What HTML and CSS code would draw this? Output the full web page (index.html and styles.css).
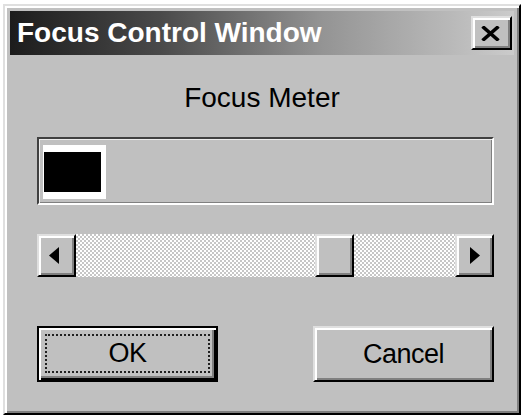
FILE: index.html
```html
<!DOCTYPE html>
<html>
<head>
<meta charset="utf-8">
<title>Focus Control Window</title>
<link rel="stylesheet" href="styles.css">
</head>
<body>
<div class="window">
  <div class="titlebar">
    <span class="title">Focus Control Window</span>
    <button class="close" aria-label="Close">
      <svg width="19" height="15" viewBox="0 0 19 15"><path d="M1.5 0.5 L17.5 14.5 M17.5 0.5 L1.5 14.5" stroke="#000" stroke-width="3.6" fill="none"/></svg>
    </button>
  </div>
  <div class="content">
    <div class="label">Focus Meter</div>
    <div class="meter">
      <div class="chunk"><div class="chunk-fill"></div></div>
    </div>
    <div class="scrollbar">
      <div class="sb-btn sb-left">
        <svg width="12" height="17" viewBox="0 0 12 17"><polygon points="11,0 11,17 1,8.5" fill="#000"/></svg>
      </div>
      <div class="track"><div class="thumb"></div></div>
      <div class="sb-btn sb-right">
        <svg width="12" height="17" viewBox="0 0 12 17"><polygon points="1,0 1,17 11,8.5" fill="#000"/></svg>
      </div>
    </div>
    <div class="buttons">
      <button class="btn default"><span class="focus">OK</span></button>
      <button class="btn">Cancel</button>
    </div>
  </div>
</div>
</body>
</html>
```

FILE: styles.css
```css
* { box-sizing: border-box; }

html, body {
  margin: 0;
  padding: 0;
  background: #ffffff;
}

body {
  font-family: "Liberation Sans", Arial, sans-serif;
}

.window {
  margin: 4px 0 0 3px;
  width: 518px;
  height: 411px;
  background: #c0c0c0;
  border: 2px solid;
  border-color: #dfdfdf #000 #000 #dfdfdf;
  box-shadow: inset 2px 2px #ffffff, inset -2px -2px #808080;
  padding: 5px;
  display: flex;
  flex-direction: column;
}

.titlebar {
  height: 44px;
  background: linear-gradient(to right, #1c1c1c 0%, #4a4a4a 30%, #949494 62%, #cbcbcb 100%);
  display: flex;
  align-items: center;
  justify-content: space-between;
  padding: 0 2px 0 7px;
}

.title {
  color: #ffffff;
  font-weight: bold;
  font-size: 28px;
  line-height: 32px;
}

.close {
  width: 41px;
  height: 34px;
  padding: 0;
  margin: 0;
  background: #c0c0c0;
  border: 2px solid;
  border-color: #dfdfdf #000 #000 #dfdfdf;
  box-shadow: inset 2px 2px #ffffff, inset -2px -2px #808080;
  display: flex;
  align-items: center;
  justify-content: center;
}

.close svg { display: block; margin-right: 2px; }

.content {
  flex: 1;
  display: flex;
  flex-direction: column;
}

.label {
  margin-top: 27px;
  height: 32px;
  line-height: 32px;
  font-size: 28px;
  color: #000;
  text-align: center;
}

.meter {
  margin: 23px 20px 0 27px;
  height: 68px;
  border: 2px solid;
  border-color: #404040 #ffffff #ffffff #404040;
  box-shadow: inset 1px 1px #ececec, inset -1px -1px #808080;
  padding: 6px 4px 4px 4px;
  display: flex;
}

.chunk {
  width: 63px;
  background: #ffffff;
  padding: 7px 5px 7px 1px;
  display: flex;
}

.chunk-fill {
  flex: 1;
  background: #000;
}

.scrollbar {
  margin: 29px 20px 0 27px;
  height: 43px;
  display: flex;
}

.sb-btn {
  width: 39px;
  height: 43px;
  flex: none;
  background: #c0c0c0;
  border: 2px solid;
  border-color: #dfdfdf #000 #000 #dfdfdf;
  box-shadow: inset 2px 2px #ffffff, inset -2px -2px #808080;
  display: flex;
  align-items: center;
  justify-content: center;
}

.sb-left svg { display: block; margin-right: 6px; }
.sb-right svg { display: block; }

.track {
  flex: 1;
  height: 43px;
  padding-left: 239px;
  background-color: #ffffff;
  background-image: conic-gradient(#c6c6c6 25%, #ffffff 25% 50%, #c6c6c6 50% 75%, #ffffff 75%);
  background-size: 4px 4px;
}

.thumb {
  width: 39px;
  height: 43px;
  background: #c0c0c0;
  border: 2px solid;
  border-color: #dfdfdf #000 #000 #dfdfdf;
  box-shadow: inset 2px 2px #ffffff, inset -2px -2px #808080;
}

.buttons {
  margin: 49px 20px 0 27px;
  display: flex;
  justify-content: space-between;
}

.btn {
  width: 181px;
  height: 56px;
  margin: 0;
  padding: 0;
  background: #c0c0c0;
  font-family: "Liberation Sans", Arial, sans-serif;
  font-size: 27px;
  letter-spacing: -0.5px;
  color: #000;
  border: 2px solid;
  border-color: #dfdfdf #000 #000 #dfdfdf;
  box-shadow: inset 2px 2px #ffffff, inset -2px -2px #808080;
  display: flex;
  align-items: center;
  justify-content: center;
}

.btn.default {
  border-color: #000;
  box-shadow: inset 2px 2px #ffffff, inset -2px -2px #000, inset -4px -4px #808080;
  padding: 6px 6px 7px 6px;
}

.focus {
  flex: 1;
  height: 100%;
  border: 2px dotted #202020;
  display: flex;
  align-items: center;
  justify-content: center;
}
```
